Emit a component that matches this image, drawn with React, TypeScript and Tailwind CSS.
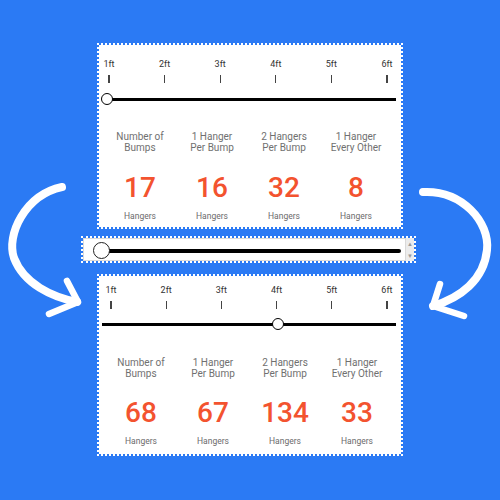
import React from "react";

const FEET = ["1ft", "2ft", "3ft", "4ft", "5ft", "6ft"];

type Stat = { label: [string, string]; value: string };

const LABELS: [string, string][] = [
  ["Number of", "Bumps"],
  ["1 Hanger", "Per Bump"],
  ["2 Hangers", "Per Bump"],
  ["1 Hanger", "Every Other"],
];

function Ticks({ className }: { className: string }) {
  return (
    <div className={`flex justify-between ${className}`}>
      {FEET.map((f) => (
        <div key={f} className="flex w-[14px] flex-col items-center">
          <span className="text-[9px] leading-[10px] text-[#333]">{f}</span>
          <span className="mt-[6px] h-[8px] w-[1.2px] bg-[#444]" />
        </div>
      ))}
    </div>
  );
}

function Track({ thumb, className }: { thumb: number; className: string }) {
  return (
    <div className={`relative h-[12px] ${className}`}>
      <div className="absolute left-0 right-0 top-[4.5px] h-[3px] bg-black" />
      <div
        className="absolute top-0 h-[12px] w-[12px] rounded-full border-[1.5px] border-black bg-white"
        style={{ left: thumb - 6 }}
      />
    </div>
  );
}

function Stats({ values, className }: { values: string[]; className: string }) {
  const stats: Stat[] = LABELS.map((label, i) => ({ label, value: values[i] }));
  return (
    <div className={`grid grid-cols-[repeat(4,72px)] ${className}`}>
      {stats.map((s, i) => (
        <div key={i} className="flex flex-col items-center">
          <div className="text-center text-[10px] leading-[11px] text-[#707070]">
            <div>{s.label[0]}</div>
            <div>{s.label[1]}</div>
          </div>
          <div className="mt-[var(--num-gap)] text-[28px] font-medium leading-[28px] text-[#f3532f]">
            {s.value}
          </div>
          <div className="mt-[var(--hang-gap)] text-[8.5px] leading-[10px] text-[#6b6b6b]">
            Hangers
          </div>
        </div>
      ))}
    </div>
  );
}

function Arrows() {
  return (
    <svg
      className="pointer-events-none absolute left-0 top-0"
      width="500"
      height="500"
      viewBox="0 0 500 500"
      fill="none"
      stroke="white"
      strokeLinecap="round"
      strokeLinejoin="round"
    >
      {/* left sweep */}
      <path d="M62 187 C 25 195, 6 235, 14 258 C 24 284, 52 297, 77 302" strokeWidth="8" />
      <path d="M67 281 L78 302 L49 314" strokeWidth="6.5" />
      {/* right sweep */}
      <path d="M423 192 C 462 190, 490 222, 487 250 C 484 280, 460 298, 433 306" strokeWidth="8" />
      <path d="M440 284 L433 306 L464 316" strokeWidth="6.5" />
    </svg>
  );
}

export default function App() {
  return (
    <div
      className="relative h-[500px] w-[500px] overflow-hidden bg-[#2b7af4]"
      style={{ fontFamily: "Roboto, 'Noto Sans', sans-serif" }}
    >
      <div className="flex flex-col items-start">
        {/* first calculator card */}
        <div className="ml-[97px] mt-[43px] h-[186px] w-[306px] border-2 border-dotted border-white bg-white bg-clip-padding">
          <Ticks className="ml-[3px] mr-[7px] pt-[14px]" />
          <Track thumb={4} className="ml-[4px] mr-[5px] mt-[10px]" />
          <Stats
            values={["17", "16", "32", "8"]}
            className="ml-[5px] mt-[26px] [--hang-gap:9px] [--num-gap:21px]"
          />
        </div>

        {/* range input strip */}
        <div className="ml-[81px] mt-[7px] flex h-[27px] w-[335px] border-2 border-dotted border-white bg-white bg-clip-padding">
          <div className="relative flex-1 border border-[#d9d9d9]">
            <div className="absolute left-[18px] right-[4px] top-[10px] h-[4px] rounded-full bg-black" />
            <div className="absolute left-[9px] top-[3px] h-[17px] w-[17px] rounded-full border-[1.5px] border-[#222] bg-white" />
          </div>
          <div className="flex w-[8px] flex-col items-center justify-between bg-[#ececec] py-[2px] text-[6px] leading-[7px] text-[#9a9a9a]">
            <span>▲</span>
            <span>▼</span>
          </div>
        </div>

        {/* second calculator card */}
        <div className="ml-[97px] mt-[11px] h-[182px] w-[306px] border-2 border-dotted border-white bg-white bg-clip-padding">
          <Ticks className="ml-[5px] mr-[7px] pt-[9px]" />
          <Track thumb={176} className="ml-[3px] mr-[5px] mt-[9px]" />
          <Stats
            values={["68", "67", "134", "33"]}
            className="ml-[6px] mt-[27px] [--hang-gap:9px] [--num-gap:20px]"
          />
        </div>
      </div>
      <Arrows />
    </div>
  );
}
